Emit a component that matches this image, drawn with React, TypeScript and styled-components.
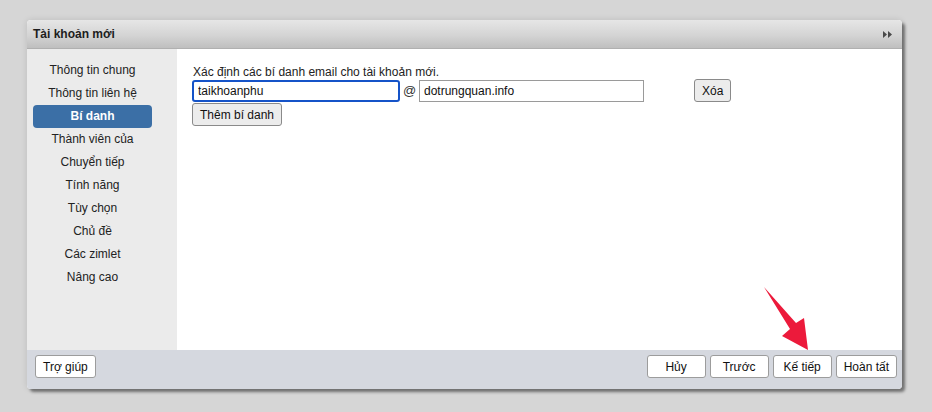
import React, { useState } from 'react';
import styled, { createGlobalStyle } from 'styled-components';

const GlobalStyle = createGlobalStyle`
  html, body {
    margin: 0;
    padding: 0;
    background: #d6d6d6;
    font-family: "Liberation Sans", Arial, Helvetica, sans-serif;
    font-size: 12px;
    color: #222;
  }
`;

const Page = styled.div`
  position: relative;
  width: 932px;
  height: 412px;
  padding: 20px 0 0 27px;
  box-sizing: border-box;
`;

const Dialog = styled.div`
  width: 875px;
  border-radius: 4px;
  overflow: hidden;
  background: #fff;
  box-shadow: 0 0 6px rgba(0, 0, 0, 0.12), 3px 3px 3px rgba(0, 0, 0, 0.45);
`;

const TitleBar = styled.div`
  height: 29px;
  display: flex;
  align-items: center;
  justify-content: space-between;
  padding: 0 10px 0 6px;
  background: linear-gradient(to bottom, #e6e6e6 0%, #d4d4d4 55%, #bfbfbf 100%);
  border-bottom: 1px solid #b0b0b0;
  box-sizing: border-box;
`;

const Title = styled.span`
  font-weight: bold;
  font-size: 12px;
  color: #1d1d1d;
`;

const Body = styled.div`
  display: grid;
  grid-template-columns: 150px 1fr;
  height: 301px;
`;

const Sidebar = styled.nav`
  background: #ebebeb;
  padding: 10px 0 0 6px;
`;

const NavItem = styled.div<{ $active?: boolean }>`
  width: 119px;
  height: 23px;
  line-height: 23px;
  text-align: center;
  border-radius: 4px;
  cursor: pointer;
  color: ${p => (p.$active ? '#fff' : '#222')};
  background: ${p => (p.$active ? '#3b6fa6' : 'transparent')};
  font-weight: ${p => (p.$active ? 'bold' : 'normal')};
`;

const Content = styled.div`
  padding: 16px 16px 0 15px;
`;

const Hint = styled.div`
  line-height: 14px;
  padding-left: 1px;
`;

const AliasRow = styled.div`
  display: flex;
  align-items: center;
  height: 23px;
`;

const TextInput = styled.input<{ $w: number; $focused?: boolean }>`
  width: ${p => p.$w}px;
  height: 22px;
  box-sizing: border-box;
  font: inherit;
  font-size: 12px;
  color: #111;
  padding: 0 4px;
  outline: none;
  border-radius: ${p => (p.$focused ? '3px' : '0')};
  border: ${p => (p.$focused ? '2px solid #1553c8' : '1px solid #9a9a9a')};
  background: #fff;
`;

const At = styled.span`
  width: 19px;
  text-align: center;
  color: #333;
  font-size: 13px;
`;

const Button = styled.button<{ $w?: number }>`
  height: 23px;
  min-width: ${p => (p.$w ? `${p.$w}px` : 'auto')};
  padding: 0 7px;
  font: inherit;
  font-size: 12px;
  color: #111;
  background: #ffffff;
  border: 1px solid #9c9c9c;
  border-radius: 3px;
  cursor: pointer;
`;

const GrayButton = styled(Button)`
  background: #ececec;
  border-color: #8a8a8a;
`;

const RemoveButton = styled(GrayButton)`
  margin-left: 50px;
`;

const AddRow = styled.div`
  margin-top: 1px;
`;

const Footer = styled.div`
  height: 39px;
  background: #d5d8df;
  display: flex;
  align-items: flex-start;
  justify-content: space-between;
  padding: 5px 5px 0 8px;
  box-sizing: border-box;
`;

const ButtonGroup = styled.div`
  display: flex;
  gap: 4px;
`;

const Pointer = styled.svg`
  position: absolute;
  left: 760px;
  top: 284px;
  pointer-events: none;
`;

const navItems = [
  'Thông tin chung',
  'Thông tin liên hệ',
  'Bí danh',
  'Thành viên của',
  'Chuyển tiếp',
  'Tính năng',
  'Tùy chọn',
  'Chủ đề',
  'Các zimlet',
  'Nâng cao',
];

const App: React.FC = () => {
  const [active, setActive] = useState(2);
  const [alias, setAlias] = useState('taikhoanphu');
  const [domain, setDomain] = useState('dotrungquan.info');

  return (
    <>
      <GlobalStyle />
      <Page>
        <Dialog>
          <TitleBar>
            <Title>Tài khoản mới</Title>
            {/* nút thu gọn */}
            <svg width="9" height="7" viewBox="0 0 9 7">
              <path d="M0 0 L4 3.5 L0 7 Z M5 0 L9 3.5 L5 7 Z" fill="#4a4a4a" />
            </svg>
          </TitleBar>
          <Body>
            <Sidebar>
              {navItems.map((label, i) => (
                <NavItem key={label} $active={i === active} onClick={() => setActive(i)}>
                  {label}
                </NavItem>
              ))}
            </Sidebar>
            <Content>
              <Hint>Xác định các bí danh email cho tài khoản mới.</Hint>
              <AliasRow>
                <TextInput
                  $w={208}
                  $focused
                  value={alias}
                  onChange={e => setAlias(e.target.value)}
                />
                <At>@</At>
                <TextInput $w={225} value={domain} onChange={e => setDomain(e.target.value)} />
                <RemoveButton>Xóa</RemoveButton>
              </AliasRow>
              <AddRow>
                <GrayButton>Thêm bí danh</GrayButton>
              </AddRow>
            </Content>
          </Body>
          <Footer>
            <Button $w={60}>Trợ giúp</Button>
            <ButtonGroup>
              <Button $w={59}>Hủy</Button>
              <Button $w={59}>Trước</Button>
              <Button $w={59}>Kế tiếp</Button>
              <Button $w={60}>Hoàn tất</Button>
            </ButtonGroup>
          </Footer>
        </Dialog>
        {/* mũi tên chỉ vào nút Kế tiếp */}
        <Pointer width="52" height="70" viewBox="760 284 52 70">
          <polygon
            points="764,287 796,323 804,318 808,350 782,336 790,329"
            fill="#ec1a3b"
          />
        </Pointer>
      </Page>
    </>
  );
};

export default App;
